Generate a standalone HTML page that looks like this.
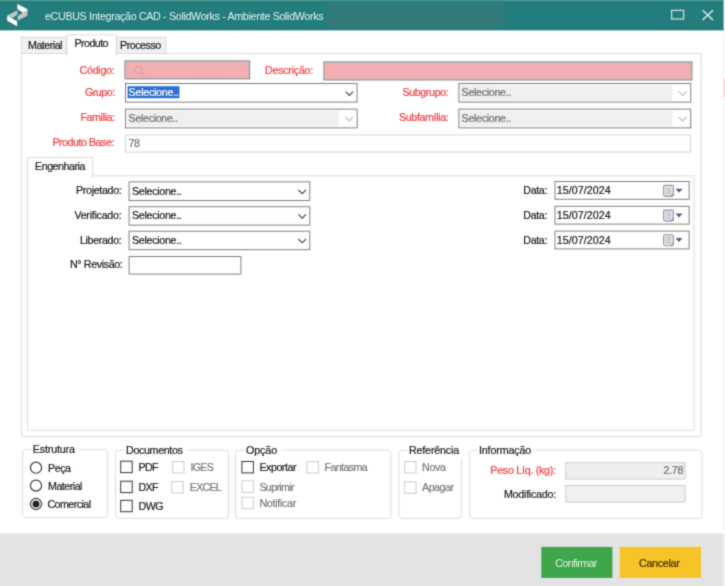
<!DOCTYPE html>
<html><head><meta charset="utf-8"><title>eCUBUS Integração CAD</title>
<style>
html,body{margin:0;padding:0;}
body{width:725px;height:586px;position:relative;overflow:hidden;background:#fff;font-family:"Liberation Sans", Arial, sans-serif;font-size:10.7px;line-height:14px;}
.b{position:absolute;box-sizing:border-box;}
.t{position:absolute;white-space:nowrap;height:14px;-webkit-text-stroke:0.2px currentColor;}
#w{position:absolute;left:0;top:0;width:725px;height:586px;filter:url(#soft);}
</style></head><body><svg width="0" height="0" style="position:absolute"><filter id="soft" x="0" y="0" width="100%" height="100%" color-interpolation-filters="sRGB"><feConvolveMatrix order="3" kernelMatrix="1 4 1 4 16 4 1 4 1" divisor="36" edgeMode="duplicate" preserveAlpha="false"/></filter></svg><div id="w">
<svg class="b" style="left:0;top:0;overflow:visible" width="725" height="586" viewBox="0 0 725 586" fill="none">
<rect x="-6.00" y="-6.00" width="729.60" height="36.35" fill="#237d7c"/>
<rect x="327.00" y="3.00" width="176.00" height="24.00" fill="#327b7a"/>
<rect x="-6.00" y="-6.00" width="729.60" height="7.10" fill="#4b9795"/>
<rect x="723.30" y="30.35" width="0.80" height="503.05" fill="#f0f0f0"/>
<rect x="723.90" y="78.00" width="2.10" height="19.00" fill="#f6cfd1"/>
<rect x="-6.00" y="533.40" width="729.20" height="62.60" fill="#e3e3e3"/>
<rect x="723.20" y="533.40" width="7.80" height="62.60" fill="#f0f0f0"/>
<rect x="541.30" y="546.90" width="71.10" height="31.00" fill="#3ea64b"/>
<rect x="619.80" y="546.90" width="81.20" height="31.00" fill="#f6c328"/>
<rect x="21.00" y="53.00" width="680.60" height="384.20" fill="#dcdcdc"/>
<rect x="22.00" y="54.00" width="678.60" height="382.20" fill="#fff"/>
<rect x="21.00" y="36.60" width="46.00" height="17.40" fill="#dcdcdc"/>
<rect x="22.00" y="37.60" width="44.00" height="15.40" fill="#f0f0f0"/>
<rect x="116.00" y="36.60" width="50.40" height="17.40" fill="#dcdcdc"/>
<rect x="117.00" y="37.60" width="48.40" height="15.40" fill="#f0f0f0"/>
<rect x="21.00" y="53.00" width="46.00" height="1.00" fill="#dcdcdc"/>
<rect x="116.00" y="53.00" width="50.40" height="1.00" fill="#dcdcdc"/>
<rect x="66.40" y="34.40" width="50.40" height="21.60" fill="#dcdcdc"/>
<rect x="67.40" y="35.40" width="48.40" height="19.60" fill="#fff"/>
<rect x="67.40" y="53.00" width="48.40" height="4.00" fill="#fff"/>
<rect x="124.40" y="60.30" width="125.80" height="19.10" fill="#8a8a8a"/>
<rect x="125.40" y="61.30" width="123.80" height="17.10" fill="#cdbfc0"/>
<rect x="126.40" y="62.30" width="121.80" height="15.10" fill="#f2aeb0"/>
<rect x="323.40" y="61.40" width="369.00" height="19.10" fill="#8a8a8a"/>
<rect x="324.40" y="62.40" width="367.00" height="17.10" fill="#cdbfc0"/>
<rect x="325.40" y="63.40" width="365.00" height="15.10" fill="#f2aeb0"/>
<rect x="125.00" y="83.00" width="232.60" height="19.60" fill="#808080"/>
<rect x="126.00" y="84.00" width="230.60" height="17.60" fill="#fff"/>
<rect x="127.60" y="86.20" width="51.80" height="12.00" fill="#2a6fd2"/>
<rect x="458.40" y="83.00" width="232.80" height="19.60" fill="#808080"/>
<rect x="459.40" y="84.00" width="230.80" height="17.60" fill="#fff"/>
<rect x="460.40" y="85.00" width="211.80" height="15.60" fill="#efefef"/>
<rect x="125.00" y="108.60" width="232.60" height="19.80" fill="#808080"/>
<rect x="126.00" y="109.60" width="230.60" height="17.80" fill="#fff"/>
<rect x="127.00" y="110.60" width="211.60" height="15.80" fill="#efefef"/>
<rect x="458.40" y="108.60" width="232.80" height="19.80" fill="#808080"/>
<rect x="459.40" y="109.60" width="230.80" height="17.80" fill="#fff"/>
<rect x="460.40" y="110.60" width="211.80" height="15.80" fill="#efefef"/>
<rect x="125.00" y="134.40" width="566.00" height="18.20" fill="#d4d4d4"/>
<rect x="126.00" y="135.40" width="564.00" height="16.20" fill="#fff"/>
<rect x="27.00" y="175.40" width="667.60" height="255.20" fill="#dcdcdc"/>
<rect x="28.00" y="176.40" width="665.60" height="253.20" fill="#fff"/>
<rect x="27.00" y="156.90" width="66.20" height="21.10" fill="#dcdcdc"/>
<rect x="28.00" y="157.90" width="64.20" height="19.10" fill="#fff"/>
<rect x="28.00" y="175.40" width="64.20" height="3.60" fill="#fff"/>
<rect x="128.60" y="181.40" width="181.70" height="19.60" fill="#808080"/>
<rect x="129.60" y="182.40" width="179.70" height="17.60" fill="#fff"/>
<rect x="128.60" y="206.20" width="181.70" height="19.40" fill="#808080"/>
<rect x="129.60" y="207.20" width="179.70" height="17.40" fill="#fff"/>
<rect x="128.60" y="230.70" width="181.70" height="19.50" fill="#808080"/>
<rect x="129.60" y="231.70" width="179.70" height="17.50" fill="#fff"/>
<rect x="554.50" y="181.00" width="135.10" height="18.80" fill="#808080"/>
<rect x="555.50" y="182.00" width="133.10" height="16.80" fill="#fff"/>
<rect x="554.50" y="205.80" width="135.10" height="18.80" fill="#808080"/>
<rect x="555.50" y="206.80" width="133.10" height="16.80" fill="#fff"/>
<rect x="554.50" y="230.60" width="135.10" height="18.80" fill="#808080"/>
<rect x="555.50" y="231.60" width="133.10" height="16.80" fill="#fff"/>
<rect x="128.60" y="256.00" width="112.80" height="18.60" fill="#808080"/>
<rect x="129.60" y="257.00" width="110.80" height="16.60" fill="#fff"/>
<rect x="22.50" y="449.50" width="85.20" height="68.20" rx="3.5" fill="none" stroke="#dcdcdc" stroke-width="1.0"/>
<rect x="115.50" y="450.10" width="113.00" height="68.40" rx="3.5" fill="none" stroke="#dcdcdc" stroke-width="1.0"/>
<rect x="235.50" y="450.10" width="155.40" height="68.40" rx="3.5" fill="none" stroke="#dcdcdc" stroke-width="1.0"/>
<rect x="398.90" y="450.10" width="62.60" height="68.40" rx="3.5" fill="none" stroke="#dcdcdc" stroke-width="1.0"/>
<rect x="469.70" y="450.10" width="232.40" height="68.40" rx="3.5" fill="none" stroke="#dcdcdc" stroke-width="1.0"/>
<rect x="31.30" y="443.00" width="48.50" height="13.60" fill="#fff"/>
<rect x="124.50" y="444.00" width="63.10" height="13.60" fill="#fff"/>
<rect x="244.50" y="444.00" width="37.50" height="13.60" fill="#fff"/>
<rect x="407.50" y="444.00" width="56.50" height="13.60" fill="#fff"/>
<rect x="477.50" y="444.00" width="58.50" height="13.60" fill="#fff"/>
<rect x="565.30" y="462.20" width="120.30" height="17.40" fill="#cbcbcb"/>
<rect x="566.30" y="463.20" width="118.30" height="15.40" fill="#efefef"/>
<rect x="565.30" y="485.00" width="120.30" height="17.60" fill="#cbcbcb"/>
<rect x="566.30" y="486.00" width="118.30" height="15.60" fill="#efefef"/>
<rect x="120.20" y="460.70" width="12.50" height="12.40" fill="#333"/>
<rect x="121.20" y="461.70" width="10.50" height="10.40" fill="#fff"/>
<rect x="120.20" y="480.70" width="12.50" height="12.40" fill="#333"/>
<rect x="121.20" y="481.70" width="10.50" height="10.40" fill="#fff"/>
<rect x="120.20" y="499.80" width="12.50" height="12.40" fill="#333"/>
<rect x="121.20" y="500.80" width="10.50" height="10.40" fill="#fff"/>
<rect x="172.00" y="461.00" width="12.50" height="12.40" fill="#cccccc"/>
<rect x="173.00" y="462.00" width="10.50" height="10.40" fill="#fff"/>
<rect x="171.20" y="481.00" width="12.50" height="12.40" fill="#cccccc"/>
<rect x="172.20" y="482.00" width="10.50" height="10.40" fill="#fff"/>
<rect x="241.40" y="461.00" width="12.50" height="12.40" fill="#333"/>
<rect x="242.40" y="462.00" width="10.50" height="10.40" fill="#fff"/>
<rect x="306.40" y="461.00" width="12.50" height="12.40" fill="#cccccc"/>
<rect x="307.40" y="462.00" width="10.50" height="10.40" fill="#fff"/>
<rect x="241.40" y="480.40" width="12.50" height="12.40" fill="#cccccc"/>
<rect x="242.40" y="481.40" width="10.50" height="10.40" fill="#fff"/>
<rect x="241.40" y="496.80" width="12.50" height="12.40" fill="#cccccc"/>
<rect x="242.40" y="497.80" width="10.50" height="10.40" fill="#fff"/>
<rect x="404.00" y="461.00" width="12.50" height="12.40" fill="#cccccc"/>
<rect x="405.00" y="462.00" width="10.50" height="10.40" fill="#fff"/>
<rect x="404.00" y="481.40" width="12.50" height="12.40" fill="#cccccc"/>
<rect x="405.00" y="482.40" width="10.50" height="10.40" fill="#fff"/>
<circle cx="36" cy="467.7" r="5.55" fill="#fff" stroke="#3a3a3a" stroke-width="1.2"/>
<circle cx="36" cy="485.6" r="5.55" fill="#fff" stroke="#3a3a3a" stroke-width="1.2"/>
<circle cx="36" cy="504" r="5.55" fill="#fff" stroke="#3a3a3a" stroke-width="1.2"/>
<circle cx="36" cy="504" r="3.5" fill="#222"/>
<!-- logo -->
<path d="M17.4 4.1 L27.5 9.3 L27.5 10.8 L22.9 12.8 L17.4 9.1 Z" fill="#fff"/>
<path d="M27.5 10.6 L27.5 15.4 L17.7 20.7 L17.7 16 L22.9 12.7 Z" fill="#c6c6c6"/>
<path d="M7.2 15.4 L17.4 10.2 L17.4 14.8 L12.3 17.9 Z" fill="#c6c6c6"/>
<path d="M7.2 15.4 L17.1 21.2 L17.1 26.2 L7.2 20.7 Z" fill="#fff"/>
<!-- window buttons -->
<rect x="671.6" y="10.4" width="12" height="8.6" stroke="#c4dfde" stroke-width="1.3"/>
<path d="M702.6 10.2 L713 20 M713 10.2 L702.6 20" stroke="#e0eeee" stroke-width="1.4"/>
<!-- search icon -->
<circle cx="138.4" cy="69.9" r="3.4" stroke="#d9a3a6" stroke-width="1.1"/>
<path d="M141 72.6 L145 76" stroke="#d9a3a6" stroke-width="1.4"/>
<!-- chevrons -->
<path d="M345.6 91.6 L349.4 95.4 L353.2 91.6" stroke="#444" stroke-width="1.15"/>
<path d="M345.2 116.8 L349.2 120.8 L353.2 116.8" stroke="#bdbdbd" stroke-width="1.2"/>
<path d="M678.6 91.4 L682.6 95.4 L686.6 91.4" stroke="#bdbdbd" stroke-width="1.2"/>
<path d="M678.6 116.8 L682.6 120.8 L686.6 116.8" stroke="#bdbdbd" stroke-width="1.2"/>
<path d="M298.4 189.8 L302.2 193.6 L306.0 189.8" stroke="#444" stroke-width="1.15"/>
<path d="M298.4 214.4 L302.2 218.2 L306.0 214.4" stroke="#444" stroke-width="1.15"/>
<path d="M298.4 239.0 L302.2 242.8 L306.0 239.0" stroke="#444" stroke-width="1.15"/>
<!-- calendar icons -->
<g>
<rect x="663.6" y="185.4" width="9.8" height="11" rx="1.6" fill="#e5e6ec" stroke="#9a9494" stroke-width="1.1"/>
<path d="M665.4 188.4h6.2M665.4 190.8h6.2M665.4 193.2h6.2M667.4 187.0v7.8M669.6 187.0v7.8" stroke="#babfce" stroke-width=".8"/>
<path d="M673.2 193.4 L673.2 196.2 L670.4 196.2 Z" fill="#8f8686"/>
<path d="M675.5 188.8 h7 l-3.5 3.9 z" fill="#525e84"/>
</g>
<g>
<rect x="663.6" y="210.1" width="9.8" height="11" rx="1.6" fill="#e5e6ec" stroke="#9a9494" stroke-width="1.1"/>
<path d="M665.4 213.1h6.2M665.4 215.5h6.2M665.4 217.9h6.2M667.4 211.7v7.8M669.6 211.7v7.8" stroke="#babfce" stroke-width=".8"/>
<path d="M673.2 218.1 L673.2 220.9 L670.4 220.9 Z" fill="#8f8686"/>
<path d="M675.5 213.5 h7 l-3.5 3.9 z" fill="#525e84"/>
</g>
<g>
<rect x="663.6" y="234.7" width="9.8" height="11" rx="1.6" fill="#e5e6ec" stroke="#9a9494" stroke-width="1.1"/>
<path d="M665.4 237.7h6.2M665.4 240.1h6.2M665.4 242.5h6.2M667.4 236.3v7.8M669.6 236.3v7.8" stroke="#babfce" stroke-width=".8"/>
<path d="M673.2 242.7 L673.2 245.5 L670.4 245.5 Z" fill="#8f8686"/>
<path d="M675.5 238.1 h7 l-3.5 3.9 z" fill="#525e84"/>
</g>
</svg>
<span class="t" style="left:45.0px;top:9px;color:#e6f1f1;letter-spacing:-0.328px;-webkit-text-stroke:0;">eCUBUS Integração CAD - SolidWorks - Ambiente SolidWorks</span>
<span class="t" style="left:28.0px;top:38px;color:#1a1a1a;letter-spacing:-0.502px;">Material</span>
<span class="t" style="left:74.4px;top:36px;color:#1a1a1a;letter-spacing:-0.548px;">Produto</span>
<span class="t" style="left:120.0px;top:38px;color:#1a1a1a;letter-spacing:-0.470px;">Processo</span>
<span class="t" style="left:79.6px;top:63px;color:#f03a41;letter-spacing:-0.292px;">Código:</span>
<span class="t" style="left:265.0px;top:63px;color:#f03a41;letter-spacing:-0.248px;">Descrição:</span>
<span class="t" style="left:85.0px;top:85px;color:#f03a41;letter-spacing:-0.515px;">Grupo:</span>
<span class="t" style="left:402.4px;top:85px;color:#f03a41;letter-spacing:-0.370px;">Subgrupo:</span>
<span class="t" style="left:80.5px;top:110px;color:#f03a41;letter-spacing:-0.502px;">Família:</span>
<span class="t" style="left:399.0px;top:110px;color:#f03a41;letter-spacing:-0.370px;">Subfamília:</span>
<span class="t" style="left:52.4px;top:135px;color:#f03a41;letter-spacing:-0.480px;">Produto Base:</span>
<span class="t" style="left:128.6px;top:136px;color:#6f6f6f;letter-spacing:-0.545px;">78</span>
<span class="t" style="left:128.6px;top:85px;color:#ffffff;letter-spacing:-0.263px;">Selecione..</span>
<span class="t" style="left:461.6px;top:85px;color:#6f6f6f;letter-spacing:-0.317px;">Selecione..</span>
<span class="t" style="left:128.6px;top:111px;color:#6f6f6f;letter-spacing:-0.336px;">Selecione..</span>
<span class="t" style="left:461.6px;top:111px;color:#6f6f6f;letter-spacing:-0.317px;">Selecione..</span>
<span class="t" style="left:35.0px;top:159px;color:#1a1a1a;letter-spacing:-0.467px;">Engenharia</span>
<span class="t" style="left:76.0px;top:183px;color:#1a1a1a;letter-spacing:-0.333px;">Projetado:</span>
<span class="t" style="left:74.4px;top:208px;color:#1a1a1a;letter-spacing:-0.264px;">Verificado:</span>
<span class="t" style="left:80.0px;top:233px;color:#1a1a1a;letter-spacing:-0.353px;">Liberado:</span>
<span class="t" style="left:70.0px;top:257px;color:#1a1a1a;letter-spacing:-0.377px;">N° Revisão:</span>
<span class="t" style="left:132.0px;top:184px;color:#1a1a1a;letter-spacing:-0.308px;">Selecione..</span>
<span class="t" style="left:132.0px;top:208px;color:#1a1a1a;letter-spacing:-0.308px;">Selecione..</span>
<span class="t" style="left:132.0px;top:233px;color:#1a1a1a;letter-spacing:-0.308px;">Selecione..</span>
<span class="t" style="left:523.3px;top:183px;color:#1a1a1a;letter-spacing:-0.369px;">Data:</span>
<span class="t" style="left:523.3px;top:208px;color:#1a1a1a;letter-spacing:-0.369px;">Data:</span>
<span class="t" style="left:523.3px;top:233px;color:#1a1a1a;letter-spacing:-0.369px;">Data:</span>
<span class="t" style="left:556.8px;top:183px;color:#1a1a1a;letter-spacing:0.050px;">15/07/2024</span>
<span class="t" style="left:556.8px;top:208px;color:#1a1a1a;letter-spacing:0.050px;">15/07/2024</span>
<span class="t" style="left:556.8px;top:233px;color:#1a1a1a;letter-spacing:0.050px;">15/07/2024</span>
<span class="t" style="left:32.8px;top:442px;color:#1a1a1a;letter-spacing:-0.153px;">Estrutura</span>
<span class="t" style="left:126.0px;top:443px;color:#1a1a1a;letter-spacing:-0.340px;">Documentos</span>
<span class="t" style="left:246.0px;top:443px;color:#1a1a1a;letter-spacing:-0.100px;">Opção</span>
<span class="t" style="left:409.0px;top:443px;color:#1a1a1a;letter-spacing:-0.169px;">Referência</span>
<span class="t" style="left:479.0px;top:443px;color:#1a1a1a;letter-spacing:-0.147px;">Informação</span>
<span class="t" style="left:48.0px;top:461px;color:#1a1a1a;letter-spacing:-0.444px;">Peça</span>
<span class="t" style="left:48.0px;top:479px;color:#1a1a1a;letter-spacing:-0.502px;">Material</span>
<span class="t" style="left:47.4px;top:497px;color:#1a1a1a;letter-spacing:-0.545px;">Comercial</span>
<span class="t" style="left:138.6px;top:460px;color:#1a1a1a;letter-spacing:-0.725px;">PDF</span>
<span class="t" style="left:138.6px;top:480px;color:#1a1a1a;letter-spacing:-0.725px;">DXF</span>
<span class="t" style="left:138.6px;top:499px;color:#1a1a1a;letter-spacing:-0.575px;">DWG</span>
<span class="t" style="left:190.6px;top:460px;color:#767676;letter-spacing:-0.787px;">IGES</span>
<span class="t" style="left:189.8px;top:480px;color:#767676;letter-spacing:-0.773px;">EXCEL</span>
<span class="t" style="left:259.4px;top:460px;color:#1a1a1a;letter-spacing:-0.476px;">Exportar</span>
<span class="t" style="left:324.6px;top:460px;color:#767676;letter-spacing:-0.641px;">Fantasma</span>
<span class="t" style="left:259.4px;top:480px;color:#767676;letter-spacing:-0.650px;">Suprimir</span>
<span class="t" style="left:259.4px;top:496px;color:#767676;letter-spacing:-0.289px;">Notificar</span>
<span class="t" style="left:422.0px;top:460px;color:#767676;letter-spacing:-0.338px;">Nova</span>
<span class="t" style="left:422.0px;top:480px;color:#767676;letter-spacing:-0.478px;">Apagar</span>
<span class="t" style="left:490.3px;top:463px;color:#f03a41;letter-spacing:-0.268px;">Peso Líq. (kg):</span>
<span class="t" style="left:503.9px;top:487px;color:#1a1a1a;letter-spacing:-0.232px;">Modificado:</span>
<span class="t" style="left:663.6px;top:463px;color:#6f6f6f;letter-spacing:-0.353px;">2.78</span>
<span class="t" style="left:555.2px;top:556px;color:#e2f1e3;letter-spacing:-0.591px;-webkit-text-stroke:0;">Confirmar</span>
<span class="t" style="left:639.0px;top:556px;color:#3b3208;letter-spacing:-0.298px;">Cancelar</span>
</div></body></html>
